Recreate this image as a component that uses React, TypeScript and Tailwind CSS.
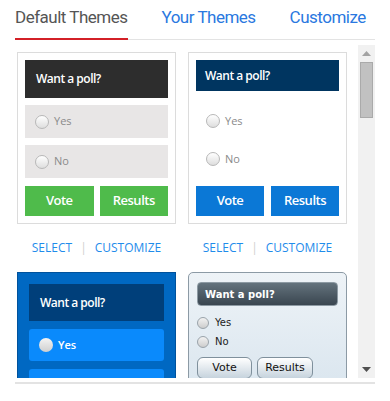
import React from "react";

const OPEN = { fontFamily: '"Open Sans", "Noto Sans", sans-serif' };
const ROBOTO = { fontFamily: 'Roboto, "Noto Sans", sans-serif' };
const TAHOMA = { fontFamily: '"DejaVu Sans", "Liberation Sans", sans-serif' };

function Radio({ cls }: { cls: string }) {
  return <span className={"inline-block rounded-full shrink-0 " + cls} />;
}

function Links() {
  return (
    <div className="h-[48px] flex items-center justify-center text-[12px] text-[#1f8ceb]" style={OPEN}>
      <span>SELECT</span>
      <span className="mx-[8px] text-[#cfcfcf]">|</span>
      <span>CUSTOMIZE</span>
    </div>
  );
}

function Card1() {
  return (
    <div className="border border-[#dcdcdc] p-[7px] bg-white" style={OPEN}>
      <div className="h-[38px] bg-[#2d2d2d] pl-[11px] flex items-center text-white text-[12px] tracking-[-0.5px] font-semibold">
        Want a poll?
      </div>
      <div className="mt-[7px] h-[33px] bg-[#e8e6e6] flex items-center pl-[10px] gap-[5px] text-[11px] text-[#8a8a8a]">
        <Radio cls="w-[14px] h-[14px] border border-[#b8b8b8] bg-gradient-to-b from-[#ffffff] to-[#dedede]" />
        Yes
      </div>
      <div className="mt-[7px] h-[33px] bg-[#e8e6e6] flex items-center pl-[10px] gap-[5px] text-[11px] text-[#8a8a8a]">
        <Radio cls="w-[14px] h-[14px] border border-[#b8b8b8] bg-gradient-to-b from-[#ffffff] to-[#dedede]" />
        No
      </div>
      <div className="mt-[8px] h-[30px] flex gap-[6px] text-white text-[13px] tracking-[-0.5px] font-semibold">
        <div className="flex-1 bg-[#4fbb4b] flex items-center justify-center">Vote</div>
        <div className="flex-1 bg-[#4fbb4b] flex items-center justify-center">Results</div>
      </div>
    </div>
  );
}

function Card2() {
  return (
    <div className="border border-[#dcdcdc] p-[7px] bg-white" style={OPEN}>
      <div className="h-[31px] bg-[#003560] pl-[9px] flex items-center text-white text-[12px] tracking-[-0.5px] font-semibold">
        Want a poll?
      </div>
      <div className="mt-[13px] h-[34px] flex items-center pl-[10px] gap-[5px] text-[11px] text-[#8a8a8a]">
        <Radio cls="w-[14px] h-[14px] border border-[#b8b8b8] bg-gradient-to-b from-[#ffffff] to-[#dedede]" />
        Yes
      </div>
      <div className="mt-[4px] h-[34px] flex items-center pl-[10px] gap-[5px] text-[11px] text-[#8a8a8a]">
        <Radio cls="w-[14px] h-[14px] border border-[#b8b8b8] bg-gradient-to-b from-[#ffffff] to-[#dedede]" />
        No
      </div>
      <div className="mt-[10px] h-[30px] flex gap-[7px] text-white text-[13px] tracking-[-0.5px] font-semibold">
        <div className="flex-1 bg-[#0b78d6] flex items-center justify-center">Vote</div>
        <div className="flex-1 bg-[#0b78d6] flex items-center justify-center">Results</div>
      </div>
    </div>
  );
}

function Card3() {
  return (
    <div className="border border-[#00529c] bg-[#0068c2] p-[11px] pb-[14px]" style={OPEN}>
      <div className="h-[37px] bg-[#003f7a] pl-[11px] flex items-center text-white text-[12px] tracking-[-0.5px] font-semibold">
        Want a poll?
      </div>
      <div className="mt-[8px] h-[32px] rounded-[3px] bg-[#0a8afc] flex items-center pl-[10px] gap-[5px] text-[11px] text-white font-semibold">
        <Radio cls="w-[14px] h-[14px] bg-gradient-to-b from-[#f4f4f4] to-[#cfcfcf]" />
        Yes
      </div>
      <div className="mt-[8px] h-[32px] rounded-[3px] bg-[#0a8afc] flex items-center pl-[10px] gap-[5px] text-[11px] text-white font-semibold">
        <Radio cls="w-[14px] h-[14px] bg-gradient-to-b from-[#f4f4f4] to-[#cfcfcf]" />
        No
      </div>
    </div>
  );
}

function Card4() {
  return (
    <div className="border border-[#8c9aa5] rounded-[5px] bg-gradient-to-b from-[#eef3f7] to-[#d6e3ed] pt-[9px] px-[8px] pb-[10px] h-[140px]" style={TAHOMA}>
      <div className="h-[24px] rounded-[4px] border border-[#8d9aa3] bg-gradient-to-b from-[#64737d] to-[#3a4650] pl-[7px] flex items-center text-white text-[10px] font-bold">
        Want a poll?
      </div>
      <div className="mt-[9px] flex items-center gap-[6px] text-[10px] text-[#222]">
        <Radio cls="w-[12px] h-[12px] border border-[#9aa3aa] bg-gradient-to-b from-[#f2f2f2] to-[#cdcdcd]" />
        Yes
      </div>
      <div className="mt-[4px] flex items-center gap-[6px] text-[10px] text-[#222]">
        <Radio cls="w-[12px] h-[12px] border border-[#9aa3aa] bg-gradient-to-b from-[#f2f2f2] to-[#cdcdcd]" />
        No
      </div>
      <div className="mt-[8px] flex gap-[5px] text-[11px] text-[#111]">
        <div className="w-[55px] h-[22px] rounded-[6px] border border-[#7f909c] bg-gradient-to-b from-[#ffffff] to-[#c6d3dd] flex items-center justify-center">Vote</div>
        <div className="w-[56px] h-[22px] rounded-[6px] border border-[#7f909c] bg-gradient-to-b from-[#ffffff] to-[#c6d3dd] flex items-center justify-center">Results</div>
      </div>
    </div>
  );
}

export default function App() {
  return (
    <div className="w-[390px] h-[401px] bg-white px-[15px] overflow-hidden">
      <div className="h-[40px] flex items-end gap-[34px] border-b border-[#e3e3e3] text-[17px] tracking-[-0.5px]" style={ROBOTO}>
        <div className="pb-[8px] border-b-2 border-[#d32027] mb-[-1px] text-[#555555]">Default Themes</div>
        <div className="pb-[9px] text-[#2a78e0]">Your Themes</div>
        <div className="pb-[9px] text-[#2a78e0]">Customize</div>
      </div>
      <div className="mt-[5px] h-[333px] flex">
        <div className="flex-1 overflow-hidden pt-[7px] pl-[2px]">
          <div className="grid grid-cols-[159px_159px] gap-x-[12px]">
            <Card1 />
            <Card2 />
            <Links />
            <Links />
            <Card3 />
            <Card4 />
          </div>
        </div>
        <div className="w-[17px] bg-[#f1f1f1] flex flex-col items-center">
          <div className="h-[17px] flex items-center justify-center">
            <svg width="9" height="5" viewBox="0 0 9 5"><path d="M0 5 L4.5 0 L9 5 Z" fill="#a3a3a3" /></svg>
          </div>
          <div className="w-[13px] h-[56px] bg-[#c1c1c1] border border-[#aaaaaa]" />
          <div className="flex-1" />
          <div className="h-[17px] flex items-center justify-center">
            <svg width="9" height="5" viewBox="0 0 9 5"><path d="M0 0 L9 0 L4.5 5 Z" fill="#505050" /></svg>
          </div>
        </div>
      </div>
      <div className="mt-[4px] h-[2px] bg-[#e3e3e3]" />
    </div>
  );
}
